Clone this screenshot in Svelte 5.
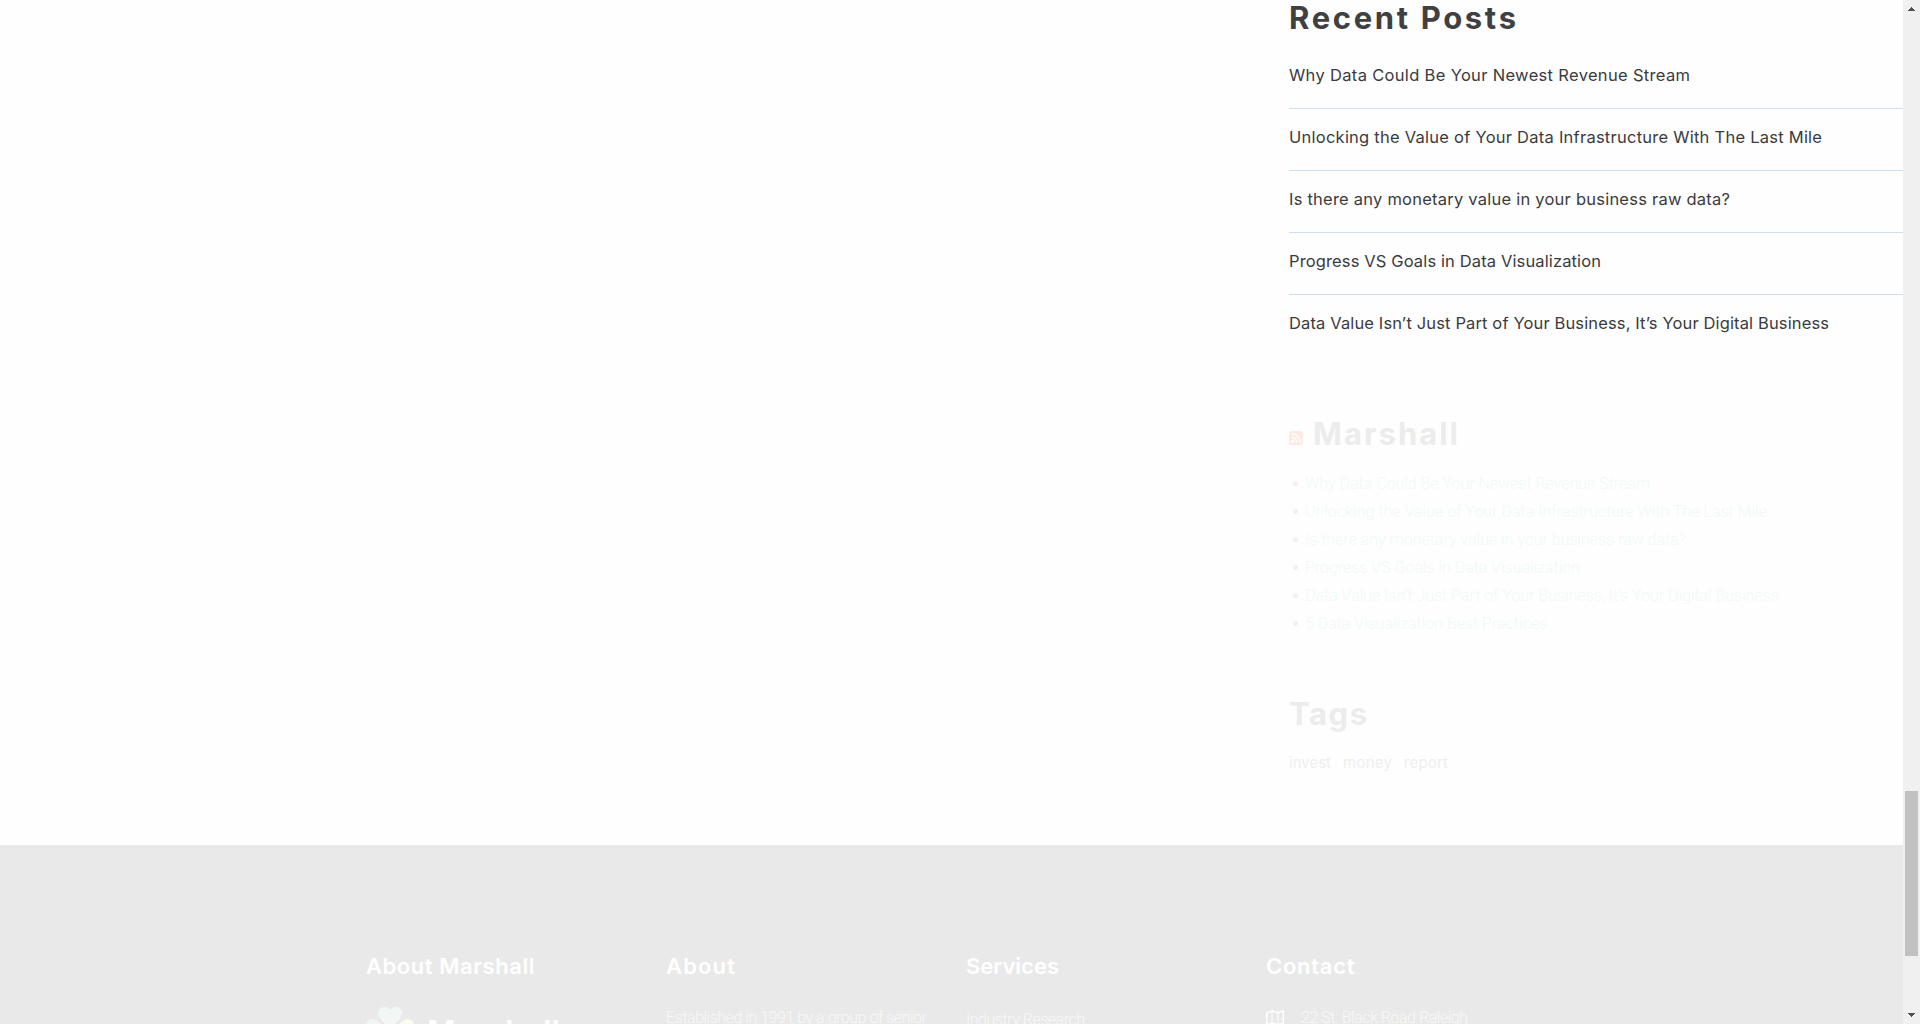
<script>
  const recent = [
    { text: 'Why Data Could Be Your Newest Revenue Stream', width: 401 },
    { text: 'Unlocking the Value of Your Data Infrastructure With The Last Mile', width: 533 },
    { text: 'Is there any monetary value in your business raw data?', width: 441 },
    { text: 'Progress VS Goals in Data Visualization', width: 312 },
    { text: 'Data Value Isn’t Just Part of Your Business, It’s Your Digital Business', width: 540 }
  ];
  const feed = [
    { text: 'Why Data Could Be Your Newest Revenue Stream', width: 345 },
    { text: 'Unlocking the Value of Your Data Infrastructure With The Last Mile', width: 462 },
    { text: 'Is there any monetary value in your business raw data?', width: 381 },
    { text: 'Progress VS Goals in Data Visualization', width: 275 },
    { text: 'Data Value Isn’t Just Part of Your Business, It’s Your Digital Business', width: 474 },
    { text: '5 Data Visualization Best Practices', width: 242 }
  ];
  const tags = [
    { text: 'invest', width: 42 },
    { text: 'money', width: 49 },
    { text: 'report', width: 44 }
  ];

  // Tracks a line out so that it spans the given measure.
  function track(node, width) {
    const natural = node.getBoundingClientRect().width;
    const gaps = node.textContent.length - 1;
    node.style.letterSpacing = `${(width - natural) / gaps}px`;
    node.style.marginRight = `${-(width - natural) / gaps}px`;
  }
</script>

<div class="window">
  <div class="page">
    <main>
      <aside>
        <section class="recent">
          <h2><span use:track={227}>Recent Posts</span></h2>
          <ul>
            {#each recent as post}
              <li><span use:track={post.width}>{post.text}</span></li>
            {/each}
          </ul>
        </section>

        <section class="feed">
          <h2>
            <svg class="rss" viewBox="0 0 14 14" width="14" height="14">
              <rect width="14" height="14" rx="2" fill="#fdebe1" />
              <circle cx="3.8" cy="10.300" r="1.500" fill="#fff" />
              <path d="M2.500 6.300a5.300 5.300 0 0 1 5.300 5.500M2.500 2.800a8.900 8.900 0 0 1 8.900 9" fill="none" stroke="#fff" stroke-width="1.500" />
            </svg>
            <span use:track={145}>Marshall</span>
          </h2>
          <ul>
            {#each feed as item}
              <li><span use:track={item.width}>{item.text}</span></li>
            {/each}
          </ul>
        </section>

        <section class="tags">
          <h2><span use:track={78}>Tags</span></h2>
          <div class="cloud">
            {#each tags as tag}
              <div><span use:track={tag.width}>{tag.text}</span></div>
            {/each}
          </div>
        </section>
      </aside>
    </main>

    <footer>
      <div class="col">
        <h3><span use:track={168.5}>About Marshall</span></h3>
        <div class="logo">
          <svg viewBox="0 0 48 48" width="48" height="48">
            <defs>
              <path id="leaf" d="M24 22C20 17 12 12 12 6.500C12 2.500 15 0 18.500 0C21 0 23 1.500 24 3.200C25 1.500 27 0 29.500 0C33 0 36 2.500 36 6.500C36 12 28 17 24 22Z" />
            </defs>
            <use href="#leaf" fill="#f0f7f5" />
            <use href="#leaf" fill="#fbfcef" transform="rotate(90 24 24)" />
            <use href="#leaf" fill="#f0f7f5" transform="rotate(180 24 24)" />
            <use href="#leaf" fill="#eff6f5" transform="rotate(270 24 24)" />
          </svg>
          <div class="word"><span use:track={133}>Marshall</span></div>
        </div>
      </div>
      <div class="col">
        <h3><span use:track={69}>About</span></h3>
        <div class="line"><span use:track={261}>Established in 1991 by a group of senior</span></div>
      </div>
      <div class="col">
        <h3><span use:track={93}>Services</span></h3>
        <div class="line lower"><span use:track={119}>Industry Research</span></div>
      </div>
      <div class="col">
        <h3><span use:track={88.5}>Contact</span></h3>
        <div class="line address">
          <svg viewBox="0 0 18 16" width="18" height="16" fill="none" stroke="#fff">
            <path d="M.75 3L6 .9L12 2.900L17.250.8V13L12 15L6 13L.75 15Z" stroke-width="1.5" />
            <path d="M6 1V13M12 3V15" stroke-width="1" />
          </svg>
          <span use:track={167}>22 St. Black Road Raleigh</span>
        </div>
      </div>
    </footer>
  </div>

  <div class="scrollbar">
    <svg viewBox="0 0 17 17" width="17" height="17"><path d="M5 11h7v-1h-1V9h-1V8H9V7H8v1H7v1H6v1H5z" fill="#505050" /></svg>
    <div class="track"><div class="thumb"></div></div>
    <svg viewBox="0 0 17 17" width="17" height="17"><path d="M5 6h7v1h-1v1h-1v1H9v1H8V9H7V8H6V7H5z" fill="#505050" /></svg>
  </div>
</div>

<style>
  :global(body) { overflow: hidden; }
  .window {
    display: flex;
    width: 1920px;
    height: 1024px;
    overflow: hidden;
    background: #fefefe;
    font-family: Inter, 'Liberation Sans', sans-serif;
  }
  .page { width: 1903px; height: 1024px; overflow: hidden; }
  main { height: 845px; display: flex; justify-content: flex-end; }
  aside { width: 614px; }
  h2, h3, ul { margin: 0; padding: 0; list-style: none; }
  span { display: inline-block; white-space: pre; }
  h2 { height: 36px; font-size: 31px; line-height: 36px; font-weight: 700; color: #ececec; }
  .recent { height: 416px; }
  .recent h2 { color: #3f4042; }
  .recent ul { padding-top: 11px; }
  .recent li {
    height: 61px;
    border-bottom: 1px solid #cde0ee;
    font-size: 16.5px;
    line-height: 57px;
    font-weight: 400;
    color: #3a3b3d;
  }
  .recent li:last-child { border: 0; }
  .feed { height: 280px; }
  .feed h2 { display: flex; gap: 10px; }
  .rss { margin-top: 15px; }
  .feed ul { padding-top: 17px; font-family: Roboto, 'Liberation Sans', sans-serif; }
  .feed li {
    display: flex;
    align-items: center;
    height: 28px;
    padding-left: 4px;
    font-size: 16px;
    font-weight: 300;
    color: #f1f9f7;
  }
  .feed li::before { content: ''; width: 5px; height: 5px; margin-right: 7px; border-radius: 50%; background: #f1f1f1; }
  .cloud { display: flex; gap: 12px; padding-top: 18px; font-size: 15px; line-height: 26px; color: #eee; }
  footer {
    display: grid;
    grid-template-columns: repeat(4, 300px);
    height: 179px;
    padding-left: 366px;
    background: #e9e9e9;
    color: #fff;
  }
  .col { padding-top: 107px; }
  h3 { height: 28px; font-size: 22px; line-height: 28px; font-weight: 600; }
  .logo { display: flex; gap: 13px; padding: 27px 0 0 0; }
  .word { padding-top: 7px; font-size: 31px; line-height: 36px; font-weight: 600; }
  .line {
    padding-top: 27px;
    font-family: Roboto, 'Liberation Sans', sans-serif;
    font-size: 16px;
    line-height: 22px;
    font-weight: 300;
    color: #f8f8f8;
  }
  .lower { padding-top: 29px; }
  .address { display: flex; gap: 17px; }
  .address svg { margin-top: 3px; }
  .scrollbar { display: flex; flex-direction: column; width: 17px; background: #f0f0f0; }
  .scrollbar svg { display: block; }
  .track { height: 990px; padding: 774px 2px 0; box-sizing: border-box; }
  .thumb { height: 165px; background: #c1c1c1; }
</style>
